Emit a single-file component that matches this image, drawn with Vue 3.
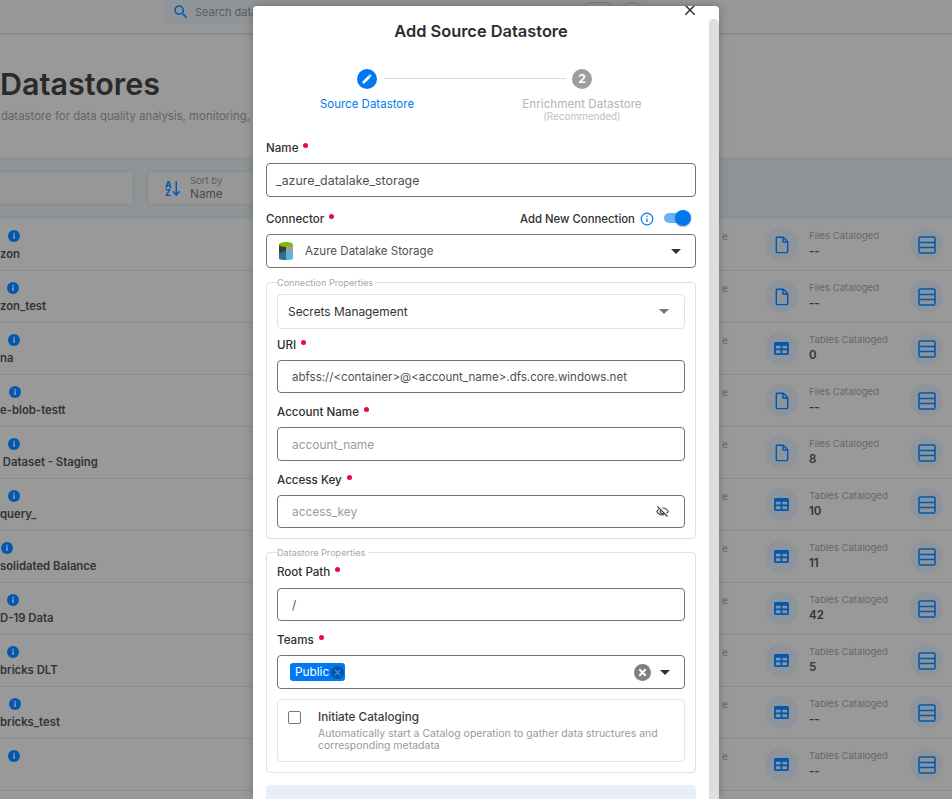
<template>
  <div class="page">
    <header class="topbar">
      <div class="search">
        <svg class="search-icon" viewBox="0 0 24 24"><path d="M15.5 14h-.79l-.28-.27A6.47 6.47 0 0 0 16 9.5 6.5 6.5 0 1 0 9.5 16c1.61 0 3.09-.59 4.23-1.57l.27.28v.79l5 4.99L20.49 19l-4.99-5zm-6 0C7.01 14 5 11.99 5 9.5S7.01 5 9.5 5 14 7.01 14 9.5 11.99 14 9.5 14z" /></svg>
        <span>Search datastores</span>
        <i class="kbd"></i>
        <i class="kbd small"></i>
      </div>
    </header>

    <section class="heading">
      <h1>Datastores</h1>
      <p>datastore for data quality analysis, monitoring, and anomaly detection</p>
    </section>

    <div class="toolbar">
      <div class="filter"></div>
      <div class="sort">
        <svg class="sort-icon" viewBox="0 0 16 18">
          <text x="0" y="8" class="az">A</text>
          <text x="0" y="17" class="az">Z</text>
          <path d="M12 1v14M8.5 12l3.5 4 3.5-4" />
        </svg>
        <div>
          <small>Sort by</small>
          <span>Name</span>
        </div>
      </div>
    </div>

    <div class="rows">
      <div v-for="row in rows" :key="row.name + row.info" class="row">
        <div class="row-name">
          <svg class="info" :style="{ marginLeft: row.info + 'px' }" viewBox="0 0 12 12">
            <circle cx="6" cy="6" r="6" />
            <rect x="5.2" y="5.2" width="1.6" height="3.8" fill="#999" />
            <rect x="5.2" y="2.8" width="1.6" height="1.6" fill="#999" />
          </svg>
          <div class="name-text">{{ row.name }}</div>
        </div>
        <span class="cut">e</span>
        <div class="round">
          <svg v-if="row.kind === 'Files'" viewBox="0 0 16 20" class="glyph file"><path d="M2 1.2h7.5L14.5 6v11.5a1.2 1.2 0 0 1-1.2 1.2H2.7a1.2 1.2 0 0 1-1.2-1.2V2a1 1 0 0 1 .5-.8zM9 1.5V6.5h5.2" /></svg>
          <svg v-else viewBox="0 0 16 14" class="glyph table"><path d="M1.5 0h13A1.5 1.5 0 0 1 16 1.5v11a1.5 1.5 0 0 1-1.5 1.5h-13A1.5 1.5 0 0 1 0 12.500v-11A1.500 1.500 0 0 1 1.500 0zM2 4v3h5V4zm7 0v3h5V4zM2 9v3h5V9zm7 0v3h5V9z" fill-rule="evenodd" /></svg>
        </div>
        <div class="stat">
          <small>{{ row.kind }} Cataloged</small>
          <b>{{ row.count }}</b>
        </div>
        <div class="round">
          <svg viewBox="0 0 18 18" class="glyph rowsicon"><rect x="1" y="1" width="16" height="16" rx="1.500" /><path d="M1 6.500h16M1 11.500h16" /></svg>
        </div>
      </div>
    </div>

    <div class="dialog">
      <button class="close" type="button" aria-label="Close">
        <svg viewBox="0 0 12 12"><path d="M2 2l8 8M10 2l-8 8" /></svg>
      </button>
      <div class="scrollbar"><div class="thumb"></div></div>
      <div class="dialog-body">
        <h2>Add Source Datastore</h2>

        <div class="stepper">
          <div class="step active">
            <div class="step-dot">
              <svg viewBox="0 0 12 12"><path d="M1.500 8.600v1.900h1.900l6-6-1.900-1.900zM10.400 3.500a.5.5 0 0 0 0-.7L9.200 1.600a.5.5 0 0 0-.7 0l-.6.600 1.900 1.900z" /></svg>
            </div>
            <div class="step-title">Source Datastore</div>
          </div>
          <div class="step-line"></div>
          <div class="step">
            <div class="step-dot">2</div>
            <div class="step-title wide">Enrichment Datastore</div>
            <div class="step-note">(Recommended)</div>
          </div>
        </div>

        <label class="label">Name<i class="req"></i></label>
        <div class="input main dark">_azure_datalake_storage</div>

        <div class="connector-head">
          <label class="label">Connector<i class="req"></i></label>
          <div class="add-new">
            <span class="add-text">Add New Connection</span>
            <svg class="outline-info" viewBox="0 0 14 14">
              <circle cx="7" cy="7" r="5.800" />
              <path d="M7 6.300v3.800M7 3.600v1.500" />
            </svg>
            <div class="switch"><div class="knob"></div></div>
          </div>
        </div>
        <div class="input main">
          <svg class="azure" viewBox="0 0 14 18">
            <path d="M0 3h7v8H0z" fill="#3b3b3b" />
            <path d="M7 3h7v8H7z" fill="#a0a0a0" />
            <path d="M0 11l7-2v9c-3.500 0-7-.5-7-1.500z" fill="#2f6f8f" />
            <path d="M14 11L7 9v9c3.500 0 7-.5 7-1.500z" fill="#59b4d9" />
            <ellipse cx="7" cy="2.500" rx="7" ry="2.500" fill="#7fba00" />
          </svg>
          <span class="dark azure-name">Azure Datalake Storage</span>
          <i class="caret"></i>
        </div>

        <fieldset class="group">
          <legend>Connection Properties</legend>
          <div class="input soft">
            <span class="ink">Secrets Management</span>
            <i class="caret grey"></i>
          </div>
          <label class="label sub">URI<i class="req"></i></label>
          <div class="input inset dark uri">abfss://&lt;container&gt;@&lt;account_name&gt;.dfs.core.windows.net</div>
          <label class="label sub tall">Account Name<i class="req"></i></label>
          <div class="input inset tallbox hint">account_name</div>
          <label class="label sub tall">Access Key<i class="req"></i></label>
          <div class="input inset hint">
            <span>access_key</span>
            <svg class="eye" viewBox="0 0 24 24"><path d="M12 6.500c3.800 0 7.200 2.100 9 5.500-.6 1.200-1.500 2.300-2.500 3.100M14.500 17.100c-.8.300-1.600.4-2.500.4-3.800 0-7.200-2.100-9-5.500.7-1.400 1.800-2.500 3-3.400M9.500 9.500a3.500 3.500 0 0 0 5 5M4 4l16 16" /></svg>
          </div>
        </fieldset>

        <fieldset class="group second">
          <legend>Datastore Properties</legend>
          <label class="label sub root">Root Path<i class="req"></i></label>
          <div class="input inset dark">/</div>
          <label class="label sub tall">Teams<i class="req"></i></label>
          <div class="input tallbox teams">
            <div class="chip">Public
              <span class="chip-x"><svg viewBox="0 0 12 12"><path d="M3.500 3.500l5 5M8.500 3.500l-5 5" /></svg></span>
            </div>
            <span class="clear"><svg viewBox="0 0 16 16"><path d="M5 5l6 6M11 5l-6 6" /></svg></span>
            <i class="caret"></i>
          </div>
          <div class="catalog">
            <span class="checkbox"></span>
            <div>
              <div class="catalog-title">Initiate Cataloging</div>
              <div class="catalog-desc">Automatically start a Catalog operation to gather data structures and corresponding metadata</div>
            </div>
          </div>
        </fieldset>

        <div class="notice"></div>
      </div>
    </div>
  </div>
</template>

<script setup>
const rows = [
  { name: 'zon', info: 8, kind: 'Files', count: '--' },
  { name: 'zon_test', info: 7, kind: 'Files', count: '--' },
  { name: 'na', info: 8, kind: 'Tables', count: '0' },
  { name: 'e-blob-testt', info: 9, kind: 'Files', count: '--' },
  { name: ' Dataset - Staging', info: 8, kind: 'Files', count: '8' },
  { name: 'query_', info: 8, kind: 'Tables', count: '10' },
  { name: 'solidated Balance', info: 1, kind: 'Tables', count: '11' },
  { name: 'D-19 Data', info: 7, kind: 'Tables', count: '42' },
  { name: 'bricks DLT', info: 7, kind: 'Tables', count: '5' },
  { name: 'bricks_test', info: 9, kind: 'Tables', count: '--' },
  { name: '', info: 8, kind: 'Tables', count: '--' }
]
</script>

<style>
html,
body {
  margin: 0;
  background: #999;
  overflow: hidden;
}
</style>

<style scoped>
.page {
  position: relative;
  width: 952px;
  height: 799px;
  overflow: hidden;
  background: #999;
  font-family: Inter, "Noto Sans", sans-serif;
  color: #333;
}

/* dimmed page behind the dialog */
.topbar {
  height: 33px;
  box-sizing: border-box;
  padding-left: 164px;
  background: #979797;
  box-shadow: 0 1px 3px rgba(0, 0, 0, 0.18);
}

.search {
  width: 486px;
  height: 24px;
  box-sizing: border-box;
  padding: 0 8px;
  display: flex;
  align-items: center;
  gap: 5px;
  background: #8f9598;
  border-radius: 0 0 4px 4px;
  font-size: 11px;
  color: #5c5c5c;
}

.search-icon {
  width: 18px;
  height: 18px;
  fill: #0058b0;
}

.kbd {
  align-self: flex-start;
  margin: 2px 0 0 289px;
  width: 28px;
  height: 18px;
  border: 1px solid #7c7c7c;
  border-radius: 6px;
}

.kbd.small {
  margin-left: 5px;
  width: 14px;
}

.heading {
  height: 124px;
  box-sizing: border-box;
  padding-top: 32px;
}

.heading h1 {
  margin: 0;
  font-size: 30.500px;
  line-height: 38px;
  font-weight: 600;
  color: #2a2a2a;
  white-space: nowrap;
}

.heading p {
  margin: 4px 0 0 1px;
  font-size: 11.400px;
  line-height: 18px;
  color: #646464;
  white-space: nowrap;
}

.toolbar {
  height: 62px;
  box-sizing: border-box;
  padding-top: 14px;
  display: flex;
  gap: 13px;
  background: #8e9396;
}

.filter,
.sort {
  height: 34px;
  box-sizing: border-box;
  background: #979797;
  border: 1px solid #8a8a8a;
  border-radius: 3px;
}

.filter {
  width: 134px;
  margin-left: 0;
  border-left: 0;
}

.sort {
  width: 200px;
  padding-left: 17px;
  display: flex;
  align-items: center;
  gap: 10px;
}

.sort small {
  display: block;
  font-size: 9.500px;
  line-height: 12px;
  color: #5e5e5e;
}

.sort span {
  display: block;
  font-size: 11.800px;
  line-height: 14px;
  color: #4a4a4a;
}

.sort-icon {
  width: 15px;
  height: 17px;
}

.sort-icon path {
  fill: none;
  stroke: #0058b0;
  stroke-width: 1.500;
}

.az {
  font-size: 9px;
  font-weight: 800;
  fill: #0058b0;
}

.row {
  height: 52px;
  box-sizing: border-box;
  display: flex;
  align-items: center;
  border-bottom: 1px solid #8a8a8a;
}

.row-name {
  width: 722px;
  height: 100%;
  box-sizing: border-box;
  padding-top: 11px;
}

.info {
  display: block;
  width: 12px;
  height: 12px;
  fill: #0058b0;
}

.name-text {
  margin-top: 4px;
  font-size: 11.300px;
  line-height: 16px;
  font-weight: 600;
  color: #333;
  white-space: pre;
}

.cut {
  width: 43px;
  margin-bottom: 18px;
  font-size: 10px;
  color: #666;
}

.round {
  width: 33px;
  height: 33px;
  flex: none;
  border-radius: 50%;
  background: #8d949c;
  display: flex;
  align-items: center;
  justify-content: center;
}

.glyph {
  fill: #0058b0;
}

.file {
  width: 14px;
  height: 18px;
  fill: none;
  stroke: #0058b0;
  stroke-width: 1.600;
}

.table {
  width: 15px;
  height: 13px;
}

.rowsicon {
  width: 18px;
  height: 18px;
  fill: none;
  stroke: #0058b0;
  stroke-width: 1.500;
}

.stat {
  width: 101px;
  margin: 0 0 2px 11px;
  white-space: nowrap;
}

.stat small {
  display: block;
  font-size: 9.600px;
  line-height: 14px;
  color: #676767;
}

.stat b {
  display: block;
  margin-top: 1px;
  font-size: 11.500px;
  line-height: 15px;
  font-weight: 600;
  color: #333;
}

/* dialog */
.dialog {
  position: absolute;
  left: 253px;
  top: 6px;
  width: 466px;
  height: 793px;
  overflow: hidden;
  background: #fff;
  border-radius: 4px 4px 0 0;
  box-shadow: 0 0 10px rgba(0, 0, 0, 0.25);
}

.close {
  position: absolute;
  right: 22px;
  top: -3px;
  width: 14px;
  height: 14px;
  padding: 0;
  border: 0;
  background: none;
}

.close svg {
  display: block;
  fill: none;
  stroke: #333;
  stroke-width: 1.300;
}

.scrollbar {
  position: absolute;
  right: 0;
  top: 13px;
  bottom: 0;
  width: 10px;
  background: #fff;
}

.thumb {
  height: 100%;
  background: #dedede;
  border-radius: 5px 5px 0 0;
}

.dialog-body {
  width: 430px;
  padding: 0 13px;
}

h2 {
  margin: 0;
  padding-top: 14px;
  font-size: 16.400px;
  line-height: 22px;
  font-weight: 600;
  text-align: center;
  color: #2d2d2d;
}

.stepper {
  display: flex;
  height: 96px;
  box-sizing: border-box;
  padding-top: 27px;
  margin-left: 2px;
  width: 428px;
}

.step {
  width: 198px;
  flex: none;
  display: flex;
  flex-direction: column;
  align-items: center;
  font-size: 11.500px;
  color: #b5b5b5;
}

.step-line {
  width: 182px;
  height: 1px;
  flex: none;
  margin: 9px -83px 0 -82px;
  background: #dcdcdc;
}

.step-dot {
  width: 20px;
  height: 20px;
  border-radius: 50%;
  background: #9e9e9e;
  color: #fff;
  font-size: 12px;
  font-weight: 700;
  line-height: 20px;
  text-align: center;
}

.step-dot svg {
  display: block;
  margin: 4px;
  width: 12px;
  height: 12px;
  fill: #fff;
}

.active .step-dot {
  background: #0078f0;
}

.active {
  color: #0078f0;
}

.step-title {
  margin-top: 8px;
  line-height: 14px;
  white-space: nowrap;
}

.step-title.wide {
  font-size: 11.700px;
}

.step-note {
  font-size: 9.900px;
  line-height: 11px;
  color: #c0c0c0;
}

.label {
  display: block;
  height: 18px;
  margin-bottom: 7px;
  font-size: 11.600px;
  line-height: 20px;
  font-weight: 500;
  color: #2f2f2f;
}

.req {
  display: inline-block;
  width: 5px;
  height: 5px;
  margin: 0 0 7px 5px;
  vertical-align: middle;
  border-radius: 50%;
  background: #e6094f;
}

.input {
  height: 34px;
  box-sizing: border-box;
  display: flex;
  align-items: center;
  padding: 0 9px;
  border: 1px solid #757575;
  border-radius: 4px;
  font-size: 11.900px;
  white-space: nowrap;
}

.input.main.dark {
  font-size: 12.400px;
}

.azure-name,
.uri {
  font-size: 11.550px;
}

.main {
  margin-bottom: 12px;
}

.main + .group {
  margin-top: -4px;
}

.dark {
  color: #505050;
}

.ink {
  color: #333;
}

.hint {
  color: #9b9b9b;
}

.connector-head {
  display: flex;
  justify-content: space-between;
}

.add-new {
  display: flex;
  align-items: flex-start;
  flex: none;
  width: 176px;
  height: 18px;
  font-size: 11.350px;
  line-height: 20px;
  font-weight: 500;
  color: #2f2f2f;
}

.add-text {
  flex: none;
  width: 116px;
  white-space: nowrap;
}

.outline-info {
  flex: none;
  width: 14px;
  height: 14px;
  margin: 3px 0 0 4px;
  fill: none;
  stroke: #0078f0;
  stroke-width: 1.200;
}

.switch {
  position: relative;
  flex: none;
  width: 24px;
  height: 10px;
  margin: 4px 0 0 10px;
  border-radius: 6px;
  background: #6fb1f7;
}

.knob {
  position: absolute;
  right: -3px;
  top: -3px;
  width: 16px;
  height: 16px;
  border-radius: 50%;
  background: #0078f0;
  box-shadow: 0 1px 2px rgba(0, 0, 0, 0.3);
}

.azure {
  width: 14px;
  height: 18px;
  margin: 0 12px 0 3px;
}

.caret {
  margin-left: auto;
  margin-right: 5px;
  width: 0;
  height: 0;
  border-left: 5px solid transparent;
  border-right: 5px solid transparent;
  border-top: 5px solid #333;
}

.caret.grey {
  border-top-color: #777;
}

.group {
  margin: 0;
  padding: 6px 10px 10px;
  min-width: 0;
  border: 1px solid #e0e0e0;
  border-radius: 4px;
}

.second {
  margin-top: 7px;
  padding-top: 4px;
}

legend {
  margin-left: 0;
  padding: 0 3px 0 0;
  height: 12px;
  font-size: 9.100px;
  line-height: 14px;
  color: #a8a8a8;
}

.soft {
  height: 35px;
  padding: 0 10px;
  border-color: #e0e0e0;
  margin-bottom: 6px;
}

.sub {
  margin-bottom: 7px;
}

.sub.tall {
  margin-top: 9px;
}

.root {
  margin-bottom: 8px;
}

.inset {
  height: 33px;
  padding: 0 14px;
}

.tallbox {
  height: 34px;
}

.eye {
  margin-left: auto;
  width: 15px;
  height: 15px;
  margin-right: 0;
  fill: none;
  stroke: #333;
  stroke-width: 1.700;
}

.teams {
  padding: 0 12px;
}

.chip {
  display: flex;
  align-items: center;
  height: 18px;
  padding: 0 0 0 5px;
  background: #0078f0;
  border-radius: 3px;
  font-size: 11.800px;
  color: #fff;
}

.chip-x {
  width: 13px;
  height: 13px;
  margin: 0 1px 0 2px;
  border-radius: 50%;
  background: #0055a8;
}

.chip-x svg {
  display: block;
  fill: none;
  stroke: #3f8fe0;
  stroke-width: 1.200;
}

.clear {
  margin-left: auto;
  margin-right: 9px;
  width: 17px;
  height: 17px;
  border-radius: 50%;
  background: #7f7f7f;
}

.clear svg {
  display: block;
  fill: none;
  stroke: #fff;
  stroke-width: 2;
}

.teams .caret {
  margin-left: 0;
  margin-right: 2px;
  width: 0;
}

.catalog {
  margin-top: 10px;
  height: 63px;
  box-sizing: border-box;
  padding: 10px 20px 0 10px;
  display: flex;
  gap: 17px;
  border: 1px solid #e6e6e6;
  border-radius: 4px;
}

.checkbox {
  flex: none;
  width: 13px;
  height: 13px;
  margin-top: 1px;
  box-sizing: border-box;
  border: 1px solid #757575;
  border-radius: 2px;
}

.catalog-title {
  font-size: 11.700px;
  line-height: 15px;
  font-weight: 500;
  color: #3a3a3a;
}

.catalog-desc {
  margin-top: 3px;
  font-size: 10.500px;
  line-height: 12px;
  color: #9a9a9a;
}

.notice {
  margin-top: 12px;
  height: 40px;
  border-radius: 4px;
  background: #e8effb;
}
</style>
